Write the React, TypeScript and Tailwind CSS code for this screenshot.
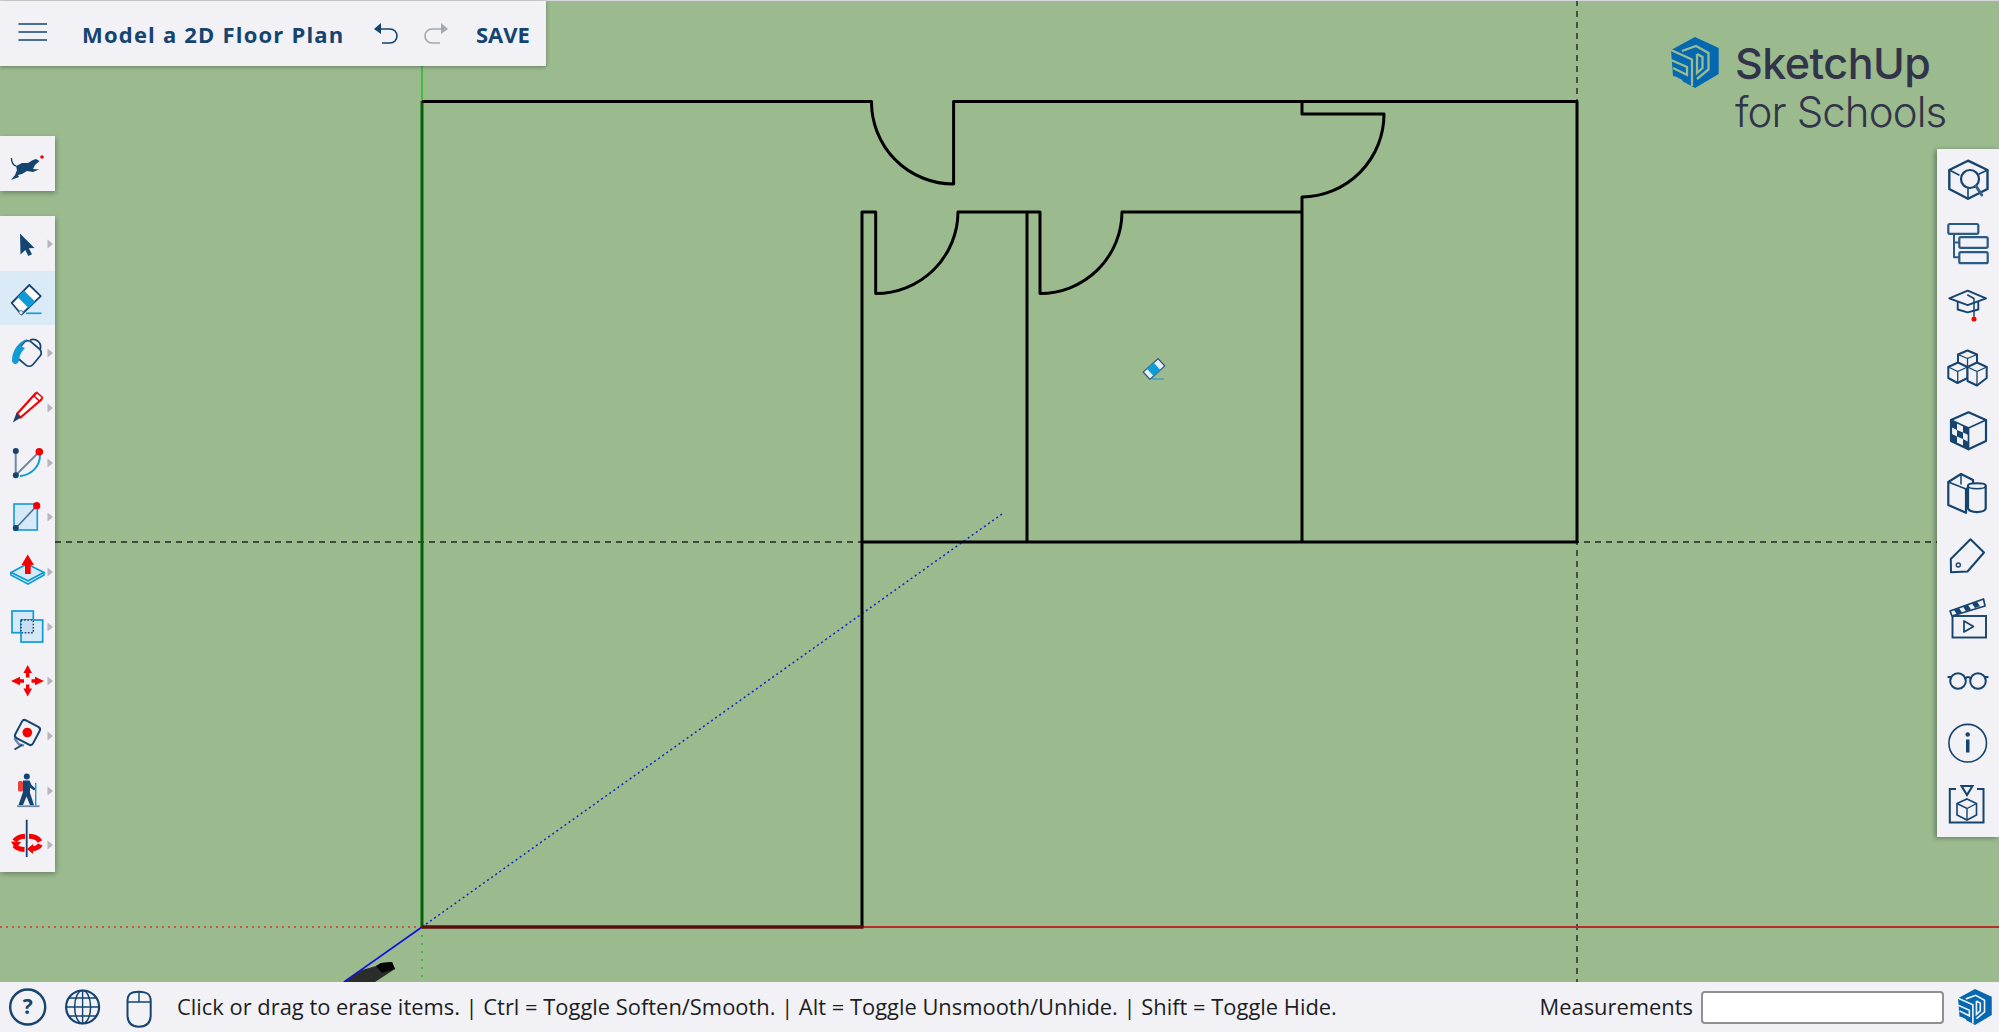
import React from "react";

const D = "#14446f";
const B = "#0f9bd7";
const L = "#d6e9f8";
const R = "#f50000";

const Caret = ({ y = 28 }: { y?: number }) => (
  <polygon points={`47.5,${y - 4.5} 53,${y} 47.5,${y + 4.5}`} fill="#b4b6bd" />
);

const leftIcons: { key: string; caret: boolean; active?: boolean; node: React.ReactNode }[] = [
  {
    key: "select",
    caret: true,
    node: <path d="M20 17.5 L34.5 32 L28.8 32.3 L32 38.2 L28.3 40 L25.3 34 L20.5 38.5 Z" fill={D} />,
  },
  {
    key: "eraser",
    caret: false,
    active: true,
    node: (
      <g>
        <polygon points="29.3,14 40.7,25.2 21.5,43.5 11.7,32" fill="#ffffff" stroke={D} strokeWidth="1.8" strokeLinejoin="round" />
        <polygon points="24,19.5 35.3,30.7 28.6,37 17.5,26" fill={B} />
        <circle cx="21" cy="41.5" r="2" fill="#f1f1f6" stroke="#5b7b96" strokeWidth="1" />
        <line x1="26" y1="42.3" x2="41.5" y2="42.3" stroke={B} strokeWidth="1.6" />
      </g>
    ),
  },
  {
    key: "paint",
    caret: true,
    node: (
      <g fill="none">
        <rect x="18" y="18" width="21" height="21" rx="5" transform="rotate(40 28.5 28.5)" fill="#f1f1f6" stroke={D} strokeWidth="1.7" />
        <path d="M30 15 C36 12.5 42.5 18 40 25" stroke={D} strokeWidth="1.7" />
        <path d="M27.5 14 C19 15.5 12 26 12 35 C12 40.5 18.5 40.5 19 35 C19.5 30 21.5 26.5 25 23 L20.5 21 C23 17.5 26 16 27.5 14 Z" fill={B} />
      </g>
    ),
  },
  {
    key: "pencil",
    caret: true,
    node: (
      <g>
        <polygon points="35.5,13.5 41.5,19.5 20.5,37.5 17,34" fill="#ffffff" stroke={R} strokeWidth="2.2" strokeLinejoin="round" />
        <polygon points="37,12.5 42.5,17.5 39.5,21 34,16" fill="#ffffff" stroke={R} strokeWidth="1.6" />
        <polygon points="16.5,33 21,37.5 12.8,42.5" fill={D} />
      </g>
    ),
  },
  {
    key: "arc",
    caret: true,
    node: (
      <g>
        <line x1="15.7" y1="16" x2="15.7" y2="40" stroke="#6f89a3" strokeWidth="2" />
        <line x1="16" y1="40" x2="39" y2="17" stroke="#6f89a3" strokeWidth="2" />
        <path d="M20 41 C31 40 40 32 40 20" fill="none" stroke={B} strokeWidth="2" />
        <circle cx="15.8" cy="16" r="3" fill={D} />
        <circle cx="15.8" cy="40.3" r="3" fill={D} />
        <circle cx="39.3" cy="16.7" r="3.8" fill={R} />
      </g>
    ),
  },
  {
    key: "rect",
    caret: true,
    node: (
      <g>
        <rect x="14" y="15" width="23.3" height="26" fill={L} stroke={B} strokeWidth="1.6" />
        <line x1="16" y1="39" x2="36.5" y2="17" stroke="#4d6f8f" strokeWidth="1.6" />
        <circle cx="15.8" cy="39" r="3" fill={D} />
        <circle cx="36.7" cy="16.7" r="3.6" fill={R} />
      </g>
    ),
  },
  {
    key: "push",
    caret: true,
    node: (
      <g>
        <polygon points="11,28.5 27,20 44,28.5 28,37" fill={L} stroke={B} strokeWidth="1.8" strokeLinejoin="round" />
        <polygon points="11,28.5 28,37 44,28.5 44,31 28,40 11,31" fill="#ffffff" stroke={B} strokeWidth="1.8" strokeLinejoin="round" />
        <polygon points="27.7,10.5 34,21 30.7,21 30.7,30 25,30 25,21 21.5,21" fill={R} />
      </g>
    ),
  },
  {
    key: "offset",
    caret: true,
    node: (
      <g>
        <rect x="12" y="12" width="21.3" height="21.7" fill={L} stroke={B} strokeWidth="1.7" />
        <rect x="21" y="21" width="21.7" height="22" fill={L} stroke={B} strokeWidth="1.7" />
        <rect x="21" y="21" width="12.3" height="12.7" fill="#c8dff2" stroke={D} strokeWidth="1.5" strokeDasharray="1.6 1.6" />
      </g>
    ),
  },
  {
    key: "move",
    caret: true,
    node: (
      <g fill={R}>
        <polygon points="27.7,12 32,20 29.4,20 29.4,24.5 26,24.5 26,20 23.4,20" />
        <polygon points="27.7,43.5 32,35.5 29.4,35.5 29.4,31.5 26,31.5 26,35.5 23.4,35.5" />
        <polygon points="11,28 20,23.7 20,26.3 24,26.3 24,29.7 20,29.7 20,32.3" />
        <polygon points="44,28 35,23.7 35,26.3 31.5,26.3 31.5,29.7 35,29.7 35,32.3" />
      </g>
    ),
  },
  {
    key: "tape",
    caret: true,
    node: (
      <g>
        <path d="M16.5 27 L15 31 L19 36.5 L24 37.5" fill="none" stroke="#6f89a3" strokeWidth="2.4" />
        <rect x="17.5" y="14.5" width="20" height="20" rx="3" transform="rotate(28 27.5 24.5)" fill="#f1f1f6" stroke={D} strokeWidth="2" />
        <circle cx="27.3" cy="24.5" r="4.8" fill={R} />
        <line x1="14.5" y1="41.5" x2="22" y2="37" stroke={D} strokeWidth="1.8" />
      </g>
    ),
  },
  {
    key: "walk",
    caret: true,
    node: (
      <g>
        <circle cx="26.8" cy="13.5" r="3" fill={D} />
        <rect x="18" y="18" width="5" height="10.5" rx="1.5" fill="#ef4040" />
        <path d="M23 17.5 L29.5 17.5 L31.5 22 L35.5 25.5 L34.3 27.5 L30 24.8 L30 30 L34 42 L30 42 L26.5 33.5 L23 42 L18.5 42 L23 29 Z" fill={D} />
        <line x1="35.7" y1="20" x2="35.7" y2="42.5" stroke={B} strokeWidth="1.4" />
        <line x1="17" y1="43.2" x2="39.5" y2="43.2" stroke="#6f89a3" strokeWidth="1.8" />
      </g>
    ),
  },
  {
    key: "orbit",
    caret: true,
    node: (
      <g>
        <g fill="none" stroke={R} strokeWidth="5">
          <path d="M14.5 24 C17 20.5 21 19.5 25 19.3" />
          <path d="M29 19.3 C34 19.5 38 21 40 24.5" />
          <path d="M14.5 28.5 C16.5 31 20 32.3 24.5 32.5" />
          <path d="M31 32 C36 31.5 39 30.5 40.3 27.5" />
        </g>
        <polygon points="11,24.5 21,25 15.5,32" fill={R} />
        <polygon points="33,27 33,37 27,32" fill={R} />
        <line x1="26.7" y1="2.7" x2="26.7" y2="40" stroke={D} strokeWidth="1.8" />
      </g>
    ),
  },
];

const s = { fill: "none", stroke: D, strokeWidth: 2, strokeLinejoin: "round" as const, strokeLinecap: "round" as const };

const rightIcons: { key: string; node: React.ReactNode }[] = [
  {
    key: "instructor",
    node: (
      <g {...s}>
        <polygon points="31,11.7 50.5,21 50.5,40 31,49.7 12.3,40 12.3,21" strokeWidth="2.4" />
        <path d="M12.3 21 L22 26 M50.5 21 L42 25 M31 49.7 L31 39" strokeWidth="1.6" />
        <circle cx="33" cy="30" r="9" fill="#f1f1f6" strokeWidth="2.2" />
        <line x1="39" y1="37" x2="44.7" y2="46" strokeWidth="3" stroke="#33628c" />
      </g>
    ),
  },
  {
    key: "outliner",
    node: (
      <g {...s} stroke="#2a5a86">
        <rect x="11.3" y="12" width="30" height="9.8" rx="1.5" strokeWidth="2.2" />
        <rect x="22.3" y="25.2" width="28.4" height="10.6" rx="1.5" strokeWidth="2.2" />
        <rect x="22.3" y="40.2" width="28.4" height="11" rx="1.5" strokeWidth="2.2" />
        <path d="M17 22 L17 45.2 L22 45.2 M17 30.5 L22 30.5" strokeWidth="2" />
      </g>
    ),
  },
  {
    key: "cap",
    node: (
      <g {...s}>
        <polygon points="30.7,16.7 49,24.3 30.7,31.2 12.3,24.3" strokeWidth="1.9" />
        <path d="M20.7 28 L20.7 35.5 L30.7 38.3 L41.3 35.5 L41.3 28" strokeWidth="1.9" />
        <path d="M30.7 21 L37 24.5 L37 42" strokeWidth="1.5" />
        <circle cx="37" cy="45" r="2.5" fill={R} stroke="none" />
      </g>
    ),
  },
  {
    key: "components",
    node: (
      <g {...s} strokeWidth="2">
        <polygon points="30.5,13.5 40,17.5 40,27.5 30.5,32 21,27.5 21,17.5" />
        <path d="M21 17.5 L30.5 21.5 L40 17.5 M30.5 21.5 L30.5 32" strokeWidth="1.3" />
        <polygon points="21,25.5 30.5,30 30.5,41 20.5,46 11.3,41 11.3,30" fill="#f1f1f6" />
        <path d="M11.3 30 L20.7 34.5 L30.5 30 M20.7 34.5 L20.7 46" strokeWidth="1.3" />
        <polygon points="40,25.5 49.7,30 49.7,41 40,48.5 30.5,44 30.5,30" fill="#f1f1f6" />
        <path d="M30.5 30 L40 34.5 L49.7 30 M40 34.5 L40 48.5" strokeWidth="1.3" />
      </g>
    ),
  },
  {
    key: "materials",
    node: (
      <g {...s}>
        <polygon points="31.5,13.3 49,21 49,42 31.5,50.3 14,42 14,21" strokeWidth="2.2" />
        <path d="M14 21 L31.5 29 L49 21 M31.5 29 L31.5 50.3" strokeWidth="1.7" />
        <g fill={D} stroke="none">
          <polygon points="14,21 20,24 20,31 14,28" />
          <polygon points="20,31 26,33.5 26,40 20,37.5" />
          <polygon points="26,26.5 31.5,29 31.5,36 26,33.5" />
          <polygon points="14,34.5 20,37.5 20,44.5 14,42" />
          <polygon points="26,40 31.5,43 31.5,50 26,47.5" />
        </g>
      </g>
    ),
  },
  {
    key: "solids",
    node: (
      <g {...s} strokeWidth="2.2">
        <polygon points="24,12 36,18 36,24 29,27 29,50.8 11.3,43 11.3,20" />
        <path d="M11.3 20 L29 27 M24 12 L24 22" strokeWidth="1.5" />
        <path d="M31 23.5 C31 20.5 48.7 20.5 48.7 23.5 L48.7 46 C48.7 51.5 31 51.5 31 46 Z" fill="#f1f1f6" />
        <path d="M31 24 C31 27.5 48.7 27.5 48.7 24" strokeWidth="1.5" />
      </g>
    ),
  },
  {
    key: "tags",
    node: (
      <g {...s}>
        <path d="M33.5 15.3 L47 28.5 L30.5 47.5 L14 48.2 L13.8 35 Z" strokeWidth="2" />
        <circle cx="21.3" cy="41" r="2" strokeWidth="1.4" />
      </g>
    ),
  },
  {
    key: "scenes",
    node: (
      <g {...s} strokeLinecap="butt">
        <rect x="15.5" y="29" width="33.5" height="21.5" strokeWidth="1.9" strokeLinejoin="miter" />
        <polygon points="13,24 46.5,12 48,19 15,29" strokeWidth="1.7" />
        <g fill={D} stroke="none">
          <polygon points="17,23 22,21 25,25.5 20,27.5" />
          <polygon points="26,19.5 31,18 34,22.5 29,24.2" />
          <polygon points="35,16.5 40,14.8 43,19.3 38,21" />
        </g>
        <polygon points="27,34 27,45 36.5,39.5" strokeWidth="1.7" />
      </g>
    ),
  },
  {
    key: "glasses",
    node: (
      <g {...s} strokeWidth="2">
        <circle cx="21" cy="32" r="7.8" />
        <circle cx="41" cy="32" r="7.8" />
        <path d="M28.5 29.5 C30 27.5 32 27.5 33.5 29.5 M11.3 28 L13.5 28 M50.7 28 L48.5 28" />
      </g>
    ),
  },
  {
    key: "info",
    node: (
      <g>
        <circle cx="30.7" cy="31.2" r="18.8" fill="none" stroke={D} strokeWidth="1.6" />
        <circle cx="30.7" cy="22.5" r="2.2" fill={D} />
        <rect x="29" y="27.5" width="3.5" height="13" fill={D} />
      </g>
    ),
  },
  {
    key: "share",
    node: (
      <g {...s} strokeLinecap="butt" strokeLinejoin="miter">
        <path d="M19 15 L12.8 15 L12.8 48.5 L46.5 48.5 L46.5 15 L40 15" strokeWidth="2" />
        <polygon points="24.5,12 35.5,12 30,21" strokeWidth="2.1" />
        <polygon points="30,25 39.5,29.5 39.5,41 30,46 20,41 20,29.5" strokeWidth="1.6" />
        <path d="M20 29.5 L30 34.5 L39.5 29.5 M30 34.5 L30 46" strokeWidth="1.4" />
      </g>
    ),
  },
];

const Logo = ({ className, line }: { className: string; line: string }) => (
  <svg viewBox="0 0 48 51" className={className}>
    <polygon points="24,0 47.7,11 47.7,37 24,51 2,39 0,13" fill="#0468b1" />
    <path
      d="M0 13 L21 22.5 L21 49 M0 23 L16 30 L16 38 L2 31 M3 40 L11 44 M11 14 L25 9 L37.5 16 L37.5 32.5 L26 42 M26 17 L31.5 20 L31.5 31 L26 36 L26 17"
      fill="none"
      stroke={line}
      strokeWidth="2.3"
    />
  </svg>
);

const FloorPlan = () => (
  <svg className="absolute inset-0 h-full w-full" viewBox="0 0 1999 982" fill="none">
    <line x1="55" y1="542" x2="1937" y2="542" stroke="#1f2a1c" strokeWidth="1.4" strokeDasharray="6 5" />
    <line x1="1577" y1="0" x2="1577" y2="982" stroke="#1f2a1c" strokeWidth="1.4" strokeDasharray="6 5" />
    <line x1="422" y1="927" x2="1002" y2="514" stroke="#1224c8" strokeWidth="1.5" strokeDasharray="2 3" />
    <line x1="0" y1="927" x2="422" y2="927" stroke="#d43a2a" strokeWidth="1.4" strokeDasharray="2 4" />
    <line x1="422" y1="927" x2="422" y2="982" stroke="#20c020" strokeWidth="1.5" strokeDasharray="2 6" />
    <line x1="422" y1="66" x2="422" y2="101" stroke="#1fc01f" strokeWidth="1.4" />
    <polygon points="343,982 375,982 395,969 392,962 381,963 376,966 362,970" fill="#2b2d2a" />
    <polygon points="376,966 381,963 392,962 395,969 382,973" fill="#050505" />
    <line x1="422" y1="927" x2="344" y2="982" stroke="#1010e0" strokeWidth="1.6" />
    <line x1="862" y1="927" x2="1999" y2="927" stroke="#b82c2c" strokeWidth="2" />
    <line x1="422" y1="101" x2="422" y2="927" stroke="#046304" strokeWidth="3" />
    <path
      d="M422 101.5 H871.5 A82 82 0 0 0 953.6 184 V101.5 H1577 V542 H862 V212 H875.7 V293.5 A82 82 0 0 0 958 212 H1040 V293.5 A82 82 0 0 0 1122 212 H1302 V197 A83 83 0 0 0 1384 114 H1302 V101.5 M1302 212 V542 M1027 212 V542 M862 542 V927"
      stroke="#000"
      strokeWidth="3"
      strokeLinejoin="round"
    />
    <line x1="422" y1="927" x2="863.5" y2="927" stroke="#5c0d0d" strokeWidth="3.4" />
    <g transform="translate(1154 369) rotate(-42)">
      <rect x="-10" y="-5" width="20" height="10" fill="#e8f1f8" stroke="#2d5478" strokeWidth="1.2" />
      <rect x="-5" y="-5" width="9" height="10" fill="#0f9bd7" />
    </g>
    <line x1="1152" y1="379" x2="1164" y2="379" stroke="#2e9cd2" strokeWidth="1.3" />
  </svg>
);

export default function App() {
  return (
    <div className="flex h-[1032px] w-[1999px] flex-col overflow-hidden font-['Open_Sans',sans-serif]">
      <main className="relative flex-1 bg-[#9bbb8f]">
        <FloorPlan />
        <div className="absolute inset-x-0 top-0 h-px bg-[#d6d7dc]" />

        <header className="absolute left-0 top-px flex h-[65px] w-[546px] items-center bg-[#f1f1f6] text-[#14446f] shadow-[0_1px_4px_rgba(0,0,0,0.35)]">
          <svg width="82" height="65" viewBox="0 0 82 65" className="shrink-0">
            <path d="M18.5 23H47M18.5 31H47M18.5 39H47" stroke={D} strokeWidth="1.4" />
          </svg>
          <h1 className="w-[291px] text-[22px] leading-none font-bold tracking-[1.2px]">Model a 2D Floor Plan</h1>
          <svg width="26" height="24" viewBox="0 0 26 24" fill="none" className="shrink-0">
            <path d="M7 7 H17 C21 7 24 10 24 14 C24 18 21 21 17 21 H9" stroke={D} strokeWidth="1.6" />
            <polygon points="1,7 8,1 8,12" fill={D} />
          </svg>
          <svg width="26" height="24" viewBox="0 0 26 24" fill="none" className="ml-[24px] shrink-0">
            <path d="M18 7 H9 C5 7 2 10 2 14 C2 18 5 21 9 21 H17" stroke="#a6a8b0" strokeWidth="1.6" />
            <polygon points="25,7 18,1 18,12" fill="#a6a8b0" />
          </svg>
          <span className="ml-[27px] text-[22px] leading-none font-bold">SAVE</span>
        </header>

        <div className="absolute left-[1671px] top-[37px] flex gap-[16px]">
          <Logo className="h-[51px] w-[48px] shrink-0" line="#9bbb8f" />
          <div className="font-['Inter',sans-serif] text-[#32344a]">
            <div className="mt-[1px] text-[43px] leading-[50px] font-medium tracking-[-0.5px]">SketchUp</div>
            <div className="-mt-[1px] text-[42px] leading-[50px] font-light tracking-[-0.9px]">for Schools</div>
          </div>
        </div>

        <aside className="absolute left-0 top-[136px] flex w-[55px] flex-col gap-[25px]">
          <div className="h-[55px] bg-[#f1f1f6] shadow-[1px_2px_5px_rgba(0,0,0,0.3)]">
            <svg width="55" height="55" viewBox="0 0 55 55">
              <path d="M11.4 22 C11.5 26 13 29 16 30" fill="none" stroke={D} strokeWidth="1.4" />
              <path d="M16 30 L22 27 L28 27 L33 24 L36 23 L39.5 25 L35 29 L33 33 L39 33.5 L33 36 L27 35 L22 38 L18 39 L19 41 L11 44 L15 39 L17 34 Z" fill={D} />
              <circle cx="42" cy="21" r="1.8" fill={R} />
            </svg>
          </div>
          <div className="flex flex-col bg-[#f1f1f6] shadow-[1px_2px_5px_rgba(0,0,0,0.3)]">
            {leftIcons.map((i) => (
              <div key={i.key} className={i.active ? "h-[54.67px] bg-[#dbeaf7]" : "h-[54.67px]"}>
                <svg width="55" height="55" viewBox="0 0 55 55">
                  {i.node}
                  {i.caret && <Caret />}
                </svg>
              </div>
            ))}
          </div>
        </aside>

        <aside className="absolute right-0 top-[149px] flex w-[62px] flex-col bg-[#f1f1f6] shadow-[-2px_1px_5px_rgba(0,0,0,0.35)]">
          {rightIcons.map((i) => (
            <div key={i.key} className="h-[62.5px]">
              <svg width="62" height="62.5" viewBox="0 0 62 62.5">
                {i.node}
              </svg>
            </div>
          ))}
        </aside>
      </main>

      <footer className="flex h-[50px] shrink-0 items-center bg-[#f1f1f6] text-[#1d1d1f]">
        <svg width="170" height="50" viewBox="0 0 170 50" fill="none" className="shrink-0">
          <circle cx="27.7" cy="25" r="17.5" stroke={D} strokeWidth="2.4" />
          <text x="27.7" y="32" textAnchor="middle" fontSize="21" fontWeight="700" fill={D} fontFamily="'Open Sans', sans-serif">?</text>
          <circle cx="82.6" cy="25" r="16.5" stroke={D} strokeWidth="2.2" />
          <ellipse cx="82.6" cy="25" rx="8" ry="16.5" stroke={D} strokeWidth="1.5" />
          <path d="M66 25H99M68.5 16H96.5M68.5 34H96.5M82.6 8.5V41.5" stroke={D} strokeWidth="1.4" />
          <path d="M127.5 19 C127.5 12 131 9.7 139 9.7 C147 9.7 150.7 12 150.7 19 V33 C150.7 41 147 44.7 139 44.7 C131 44.7 127.5 41 127.5 33 Z" stroke={D} strokeWidth="2" />
          <path d="M127.5 20H150.7M139 9.7V20" stroke={D} strokeWidth="1.4" />
        </svg>
        <p className="ml-[7px] flex-1 text-[21.9px] whitespace-nowrap">
          Click or drag to erase items. | Ctrl = Toggle Soften/Smooth. | Alt = Toggle Unsmooth/Unhide. | Shift = Toggle Hide.
        </p>
        <label className="text-[21.9px]">Measurements</label>
        <input aria-label="Measurements" className="ml-[8px] h-[33px] w-[243px] rounded-[4px] border-2 border-[#8f9094] bg-white" />
        <Logo className="ml-[14px] mr-[7px] h-[36px] w-[34px] shrink-0" line="#f1f1f6" />
      </footer>
    </div>
  );
}
